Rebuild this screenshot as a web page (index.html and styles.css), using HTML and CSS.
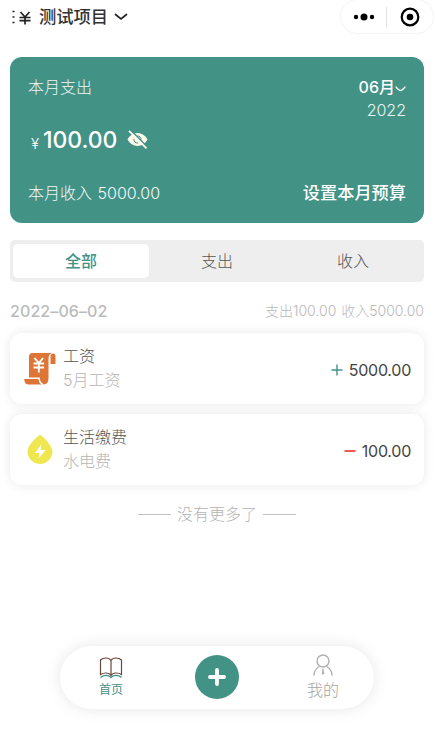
FILE: index.html
```html
<!DOCTYPE html>
<html lang="zh-CN">
<head>
<meta charset="utf-8">
<title>测试项目</title>
<link rel="stylesheet" href="styles.css">
</head>
<body>
<main class="app">
  <header class="header">
    <div class="project">
      <svg class="project-icon" width="20" height="16" viewBox="0 0 20 16" fill="none" stroke="#222" stroke-width="1.7"><path d="M.5 1.500h2M.5 7h2M.5 12.500h2M8.500 2l4.500 5 4.500-5M7.500 7.500h11M7.500 10.700h11M13 7v7.500"/></svg>
      <span class="project-name">测试项目</span>
      <svg width="14" height="8" viewBox="0 0 14 8" fill="none" stroke="#222" stroke-width="1.700" stroke-linecap="round"><path d="M1.500 1.500L7 6l5.500-4.500"/></svg>
    </div>
    <div class="capsule">
      <svg width="22" height="8" viewBox="0 0 22 8"><circle cx="3" cy="4" r="2.200"/><circle cx="11" cy="4" r="3.500"/><circle cx="19" cy="4" r="2.200"/></svg>
      <i class="capsule-line"></i>
      <svg width="20" height="20" viewBox="0 0 20 20"><circle cx="10" cy="10" r="8.300" fill="none" stroke="#000" stroke-width="2.200"/><circle cx="10" cy="10" r="3.300"/></svg>
    </div>
  </header>

  <section class="summary">
    <div class="summary-top">
      <span class="label">本月支出</span>
      <div class="date">
        <div class="month"><span>06月</span><svg width="11" height="6" viewBox="0 0 11 6" fill="none" stroke="#fff" stroke-width="1.300" stroke-linecap="round"><path d="M1 1q3 3.500 4.500 3.500t4.500-3.500"/></svg></div>
        <div class="year">2022</div>
      </div>
    </div>
    <div class="amount">
      <span class="yen">¥</span><span class="total">100.00</span>
      <svg class="eye" width="21" height="20" viewBox="0 0 21 20"><path d="M.5 9.500Q4 3 10.500 3T20.500 9.500Q17 16 10.500 16T.5 9.500z" fill="#fcf8ea"/><path d="M10 6A3.500 3.500 0 0 1 14 10M7 9A3.500 3.500 0 0 0 11 13" fill="none" stroke="#429286" stroke-width="1"/><path d="M3.500 0L21 17.500" stroke="#429286" stroke-width="1.500"/><path d="M2 .8L19.500 18.300" stroke="#fcf8ea" stroke-width="1.700"/></svg>
    </div>
    <div class="summary-bottom">
      <span class="label">本月收入 <span class="income">5000.00</span></span>
      <span class="budget">设置本月预算</span>
    </div>
  </section>

  <nav class="segments">
    <span class="segment segment-active">全部</span>
    <span class="segment">支出</span>
    <span class="segment">收入</span>
  </nav>

  <div class="day">
    <span class="day-date">2022–06–02</span>
    <span class="day-sum">支出100.00 收入5000.00</span>
  </div>

  <section class="records">
    <article class="record">
      <svg class="record-icon" width="32" height="34" viewBox="0 0 32 34"><path d="M8.500 1H28q-3.500 1-3.500 6v19q0 6.500-5 6.500-3.500 0-4-5H5V4.500Q5 1 8.500 1z" fill="#dc7536"/><path d="M26.500 12V4.500q0-3 2.500-3t2.500 3V12zM.2 27H14.500q.5 4 3.500 5.500H5Q.2 32.500 .2 27z" fill="#dc7536"/><path d="M0 26.300h15.200q.2 4.500 3.800 6.200" fill="none" stroke="#fff" stroke-width="1.400"/><path d="M10.500 6l4.300 5 4.300-5M9.500 11.500h10.600M9.500 15.500h10.600M14.800 11v9.500" fill="none" stroke="#fff" stroke-width="1.900"/></svg>
      <div class="record-text"><div class="record-name">工资</div><div class="record-note">5月工资</div></div>
      <svg class="sign" width="12" height="12" viewBox="0 0 12 12"><path d="M.5 6h11M6 .5v11" stroke="#429286" stroke-width="1.400"/></svg>
      <span class="record-value">5000.00</span>
    </article>
    <article class="record">
      <svg class="record-icon" width="32" height="34" viewBox="0 0 32 34"><path d="M16 2Q17.500 2 22.500 7.500T28.500 18.500a12.500 12.500 0 0 1-25 0Q3.500 13.500 9.500 7.500T16 2z" fill="#f0e750"/><path d="M17.300 11.500l-6.300 8.500h4.500l-1 5.500 7.200-8.500h-5z" fill="#fff"/></svg>
      <div class="record-text"><div class="record-name">生活缴费</div><div class="record-note">水电费</div></div>
      <svg class="sign" width="12" height="12" viewBox="0 0 12 12"><path d="M.5 6h11" stroke="#ec483c" stroke-width="1.800"/></svg>
      <span class="record-value">100.00</span>
    </article>
  </section>

  <div class="end"><i class="end-line"></i><span>没有更多了</span><i class="end-line"></i></div>

  <nav class="tabbar">
    <div class="tab tab-home">
      <svg width="24" height="22" viewBox="0 0 24 22" fill="none"><path d="M12 3.500Q10.500 1 7 1T1.500 3v14.500Q3.500 16 7 16t5 2.500Q13.500 16 17 16t5.500 1.500V3Q20.500 1 17 1t-5 2.500zM12 3.500v14.500" stroke="#69483c" stroke-width="1.200"/><path d="M1.500 20.500Q4 18.300 7 18.300t5 2.200Q14 18.300 17 18.300t5.500 2.200" stroke="#429286" stroke-width="1.200"/></svg>
      <span>首页</span>
    </div>
    <div class="add"><svg width="18" height="18" viewBox="0 0 18 18"><path d="M9 2v14M2 9h14" stroke="#fff" stroke-width="3.800" stroke-linecap="round"/></svg></div>
    <div class="tab tab-mine">
      <svg width="20" height="22" viewBox="0 0 20 22" fill="none" stroke="#b0b0b0" stroke-width="1.400"><circle cx="10" cy="7" r="6"/><path d="M1 21.500q0-6 5.500-9M19 21.500q0-6-5.500-9"/><path d="M9.500 14.500h1l.7 5-1.200 1.500-1.200-1.500z" fill="#b0b0b0" stroke="none"/></svg>
      <span>我的</span>
    </div>
  </nav>
</main>
</body>
</html>
```
FILE: styles.css
```css
* { box-sizing: border-box; }
body { margin: 0; background: #fff; font-family: Inter, "Noto Sans CJK SC", sans-serif; font-size: 16px; font-weight: 300; line-height: 24px; color: #555; white-space: nowrap; }
svg { display: block; flex: none; }
.app { width: 435px; height: 746px; padding: 0 11px 0 10px; display: flex; flex-direction: column; overflow: hidden; }
.header { height: 57px; flex: none; display: flex; justify-content: space-between; align-items: flex-start; margin-right: -11px; }
.project { display: flex; align-items: center; height: 33px; padding-left: 2px; }
.project-icon { margin-top: 3px; }
.project-name { margin: 0 6px 0 7px; font-size: 17.3px; font-weight: 500; color: #333; }
.capsule { width: 94px; height: 35px; margin: -1px 1px 0 0; border: 1px solid #f3f3f3; border-radius: 18px; display: flex; align-items: center; padding-left: 12px; }
.capsule-line { width: 1px; height: 20px; background: #e2e2e2; margin: 0 13px 0 11px; }
.summary { height: 166px; flex: none; border-radius: 12px; background: #429286; color: #fff; padding: 18px; display: flex; flex-direction: column; }
.summary-top, .summary-bottom { display: flex; justify-content: space-between; }
.summary-top { height: 48px; }
.label { color: #f2f9f7; }
.income { margin-left: 1px; }
.date { text-align: right; }
.month { display: flex; align-items: center; font-weight: 500; }
.month svg { margin-top: 3px; }
.year { color: #e8f4f1; margin-top: -1px; }
.amount { display: flex; align-items: center; height: 36px; padding-left: 3px; }
.yen { font-size: 15px; margin: 7px 4px 0 0; }
.total { font-size: 23px; font-weight: 500; letter-spacing: -.1px; }
.eye { margin-left: 10px; }
.summary-bottom { margin-top: 23px; }
.budget { font-size: 17.200px; font-weight: 500; }
.segments { height: 42px; flex: none; margin-top: 17px; border-radius: 5px; background: #eee; padding: 4px 3px; display: flex; }
.segment { flex: 1; display: flex; align-items: center; justify-content: center; border-radius: 5px; }
.segment-active { background: #fff; color: #429286; font-weight: 500; }
.day { height: 24px; flex: none; margin-top: 17px; display: flex; justify-content: space-between; color: #bbb; }
.day-date { font-weight: 500; letter-spacing: .1px; }
.day-sum { font-size: 14px; color: #b8b8b8; word-spacing: 1px; }
.records { margin-top: 10px; display: grid; gap: 10px; }
.record { height: 71px; border-radius: 12px; background: #fff; box-shadow: 0 0 12px rgba(0, 0, 0, .09); display: flex; align-items: center; padding: 0 13px 0 14px; }
.record-text { margin: -1px 0 0 7px; flex: 1; }
.record-name { color: #555; }
.record-note { color: #b6b6b6; }
.sign { margin: 2px 6px 0 0; }
.record-value { color: #444; font-weight: 400; letter-spacing: -.25px; padding-top: 2px; }
.end { margin-top: 17px; display: flex; align-items: center; justify-content: center; color: #b4b4b4; }
.end-line { width: 33px; height: 1px; background: #c0c0c0; margin: 0 6px; }
.tabbar { width: 314px; height: 63px; flex: none; margin: 120px auto 0; border-radius: 32px; background: #fff; box-shadow: 0 0 16px rgba(0, 0, 0, .1); display: grid; grid-template-columns: 102px 110px 102px; align-items: center; justify-items: center; }
.tab { display: flex; flex-direction: column; align-items: center; }
.tab-home { color: #429286; font-size: 12px; font-weight: 400; padding-top: 2px; }
.tab-home span { line-height: 20px; margin-top: 1px; }
.tab-mine { color: #a4a4a4; }
.tab-mine span { margin-top: 2px; }
.add { width: 44px; height: 44px; margin-top: -1px; border-radius: 50%; background: #429286; display: flex; align-items: center; justify-content: center; }
```
